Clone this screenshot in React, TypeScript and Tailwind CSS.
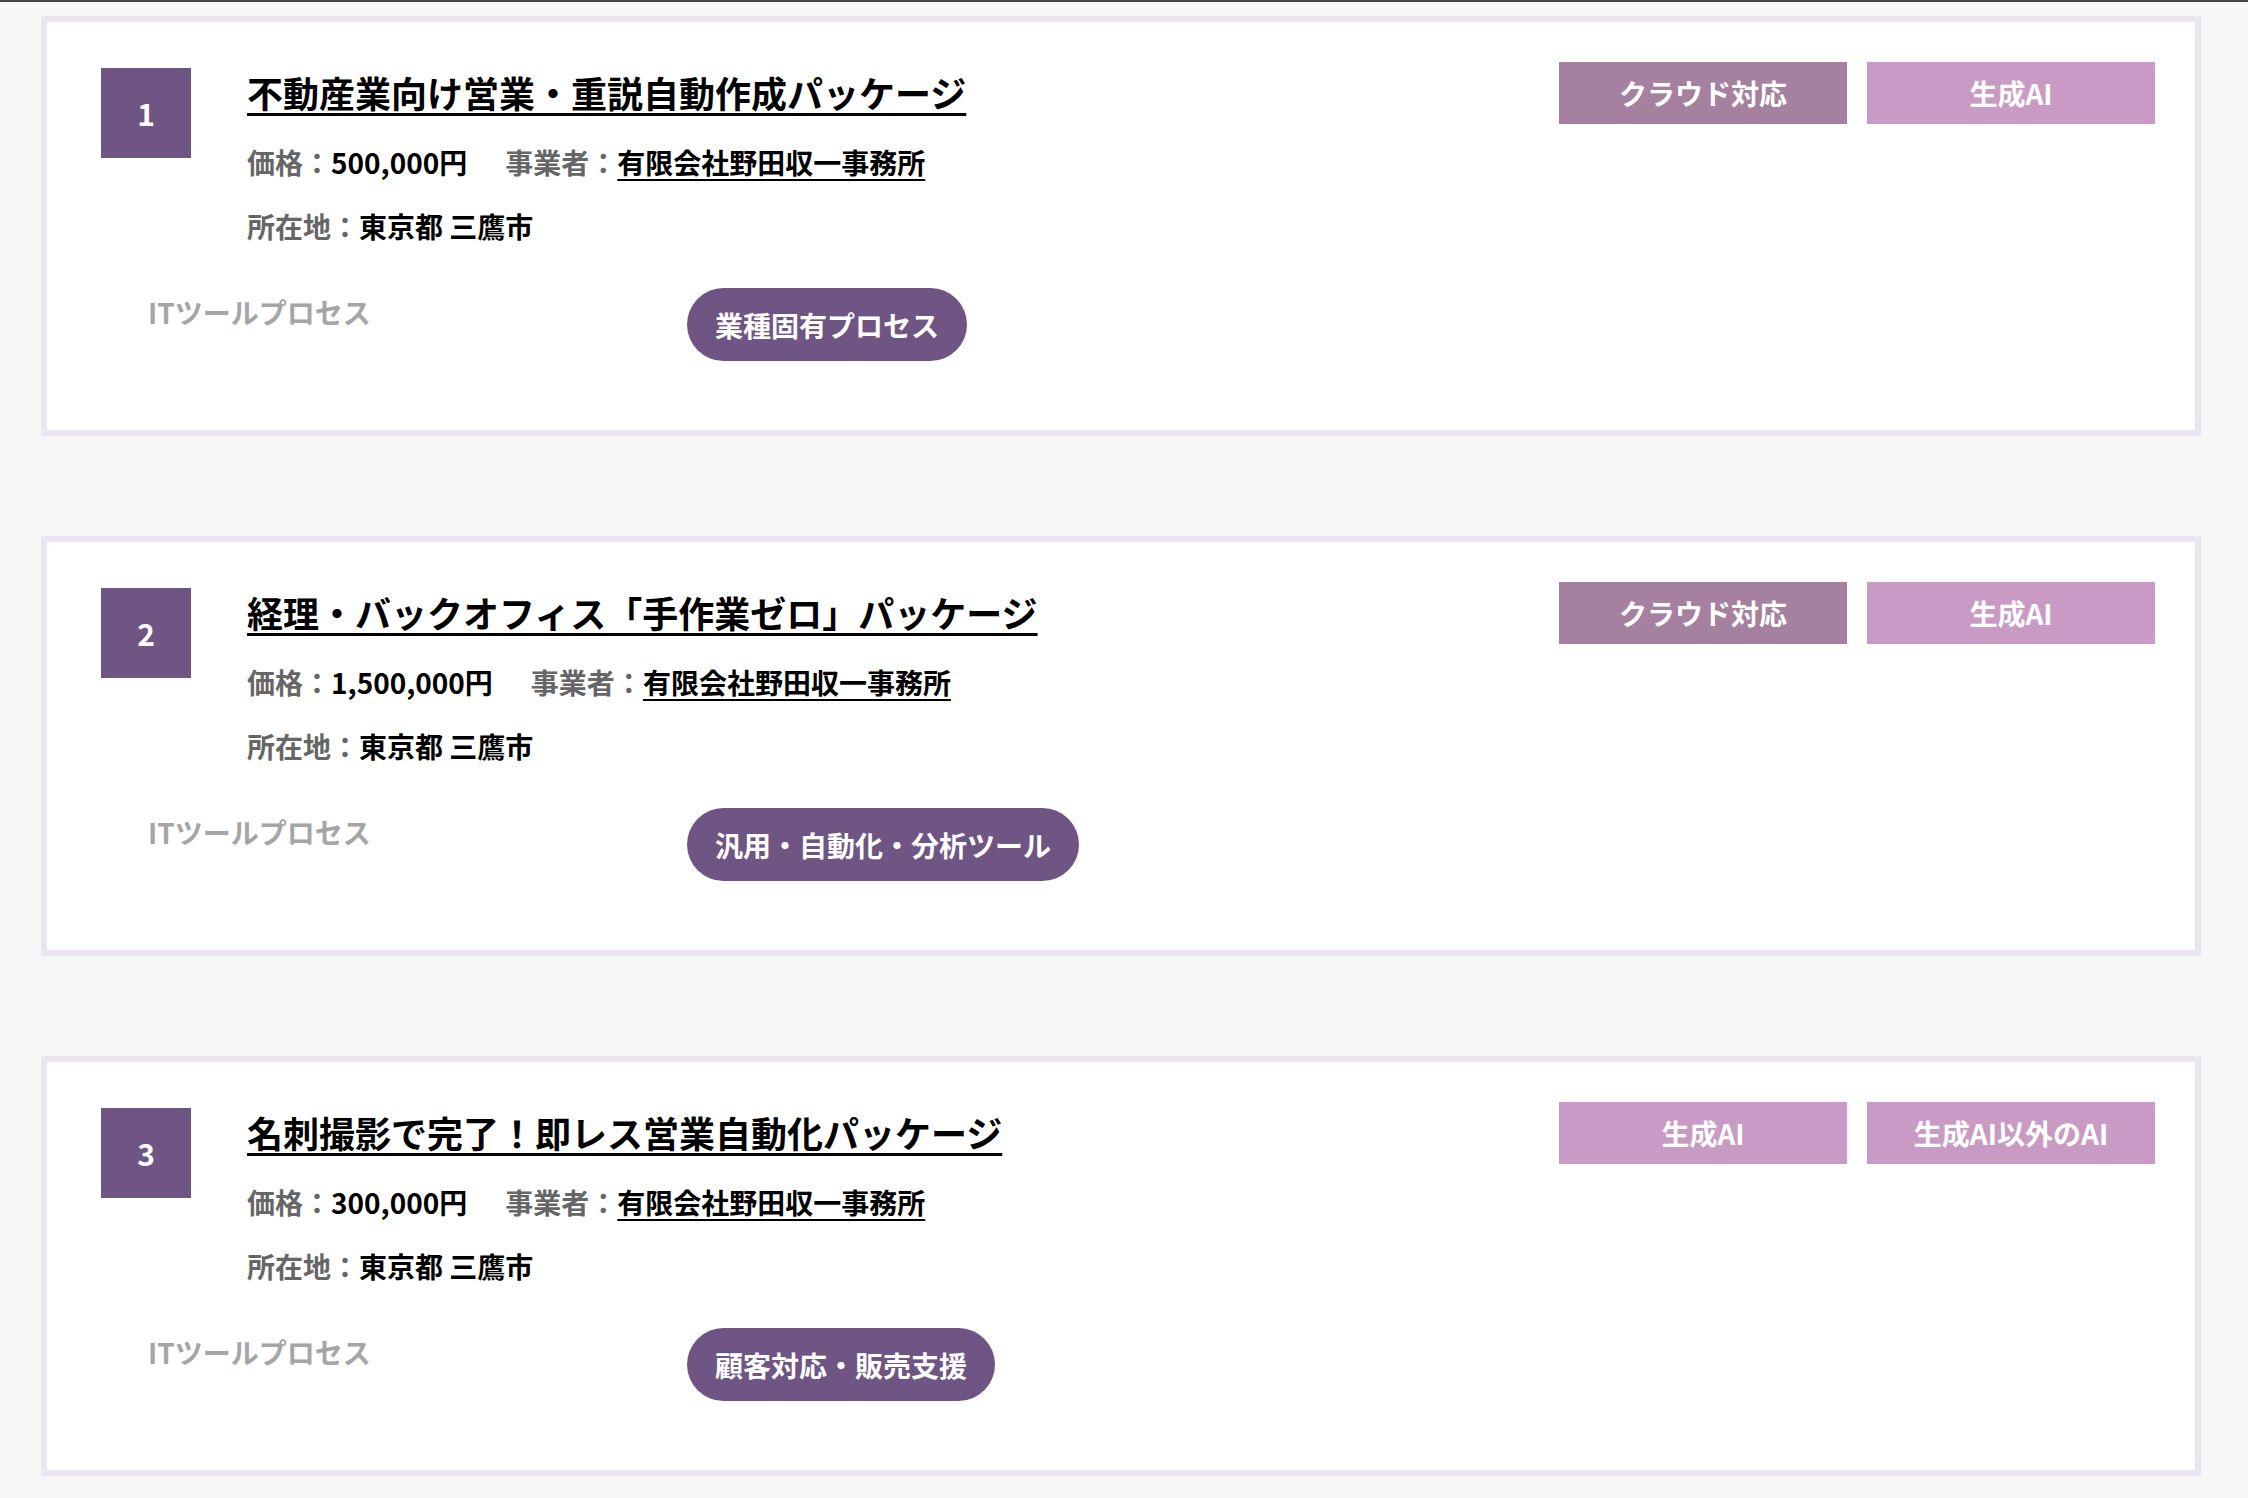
import React from 'react';

interface Item {
    no: number;
    title: string;
    price: string;
    tags: { label: string; tone: 'dark' | 'light' }[];
    process: string;
}

const items: Item[] = [
    {
        no: 1,
        title: '不動産業向け営業・重説自動作成パッケージ',
        price: '500,000円',
        tags: [
            { label: 'クラウド対応', tone: 'dark' },
            { label: '生成AI', tone: 'light' },
        ],
        process: '業種固有プロセス',
    },
    {
        no: 2,
        title: '経理・バックオフィス「手作業ゼロ」パッケージ',
        price: '1,500,000円',
        tags: [
            { label: 'クラウド対応', tone: 'dark' },
            { label: '生成AI', tone: 'light' },
        ],
        process: '汎用・自動化・分析ツール',
    },
    {
        no: 3,
        title: '名刺撮影で完了！即レス営業自動化パッケージ',
        price: '300,000円',
        tags: [
            { label: '生成AI', tone: 'light' },
            { label: '生成AI以外のAI', tone: 'light' },
        ],
        process: '顧客対応・販売支援',
    },
];

function ToolCard({ item }: { item: Item }) {
    return (
        <div className="w-[2160px] h-[420px] border-[6px] border-[#ebe5f1] bg-white pt-[40px]">
            {/* Top row: number + info, tags on the right */}
            <div className="flex justify-between pl-[54px] pr-[40px]">
                <div className="flex">
                    <div className="mt-[6px] w-[90px] h-[90px] bg-[#6f5583] flex items-center justify-center text-white font-bold text-[30px]">
                        {item.no}
                    </div>
                    <div className="ml-[56px] pt-[3px]">
                        <a className="block text-[36px] leading-[54px] font-bold text-black underline decoration-[3px] underline-offset-[5px]">
                            {item.title}
                        </a>
                        <p className="mt-[22px] text-[28px] leading-[42px] font-bold">
                            <span className="text-[#666]">価格：</span>
                            <span className="text-black">{item.price}</span>
                            <span className="ml-[38px] text-[#666]">事業者：</span>
                            <a className="text-black underline decoration-2 underline-offset-[5px]">有限会社野田収一事務所</a>
                        </p>
                        <p className="mt-[22px] text-[28px] leading-[42px] font-bold">
                            <span className="text-[#666]">所在地：</span>
                            <span className="text-black">東京都 三鷹市</span>
                        </p>
                    </div>
                </div>
                <div className="flex gap-[20px]">
                    {item.tags.map((t) => (
                        <span
                            key={t.label}
                            className={
                                'w-[288px] h-[62px] flex items-center justify-center text-white font-bold text-[28px] ' +
                                (t.tone === 'dark' ? 'bg-[#a6809f]' : 'bg-[#c99bc4]')
                            }
                        >
                            {t.label}
                        </span>
                    ))}
                </div>
            </div>

            {/* Bottom row: process label + pill */}
            <div className="flex items-start mt-[41px] pl-[101px]">
                <span className="mt-[3px] w-[539px] text-[28px] leading-[42px] font-bold text-[#a5a5a5]">ITツールプロセス</span>
                <span className="h-[73px] px-[28px] rounded-full bg-[#6f5583] text-white font-bold text-[28px] flex items-center">
                    {item.process}
                </span>
            </div>
        </div>
    );
}

export default function App() {
    return (
        <div className="min-h-screen bg-[#f7f7f7] font-['Noto_Sans_CJK_JP',sans-serif]">
            <div className="h-[2px] bg-[#444]" />
            <div className="pl-[41px] pt-[14px] flex flex-col gap-[100px] pb-[24px]">
                {items.map((item) => (
                    <ToolCard key={item.no} item={item} />
                ))}
            </div>
        </div>
    );
}
